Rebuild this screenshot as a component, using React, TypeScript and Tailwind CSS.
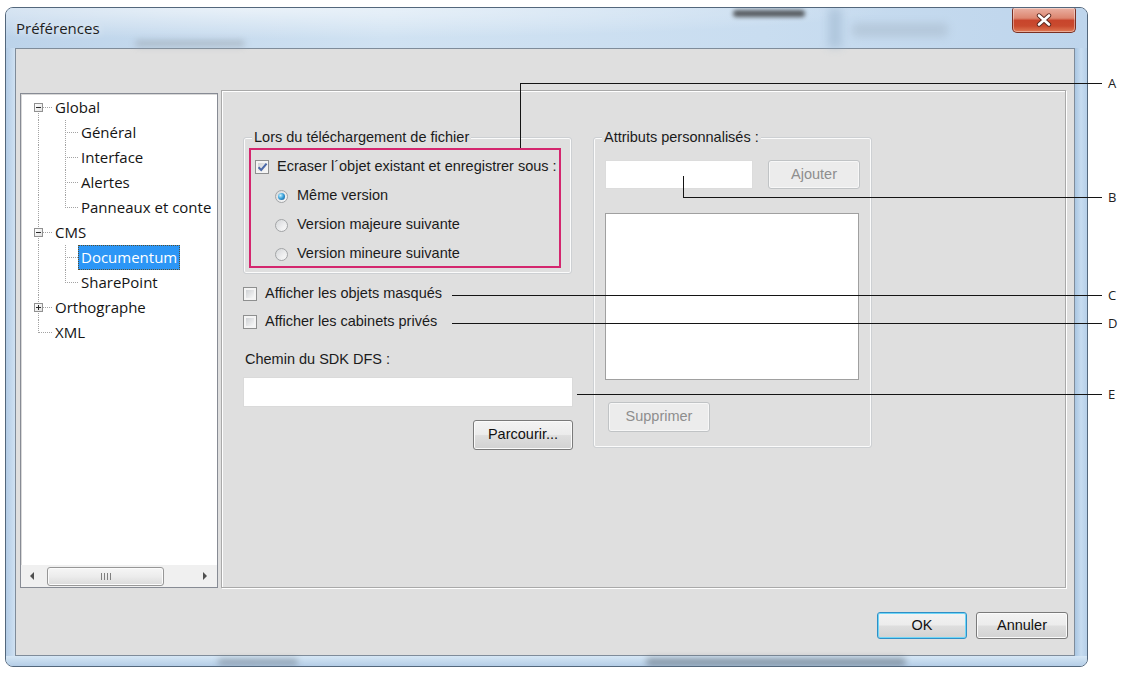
import React from "react";

const ui = "font-['Liberation_Sans',Arial,sans-serif]";
const seg = "font-['Open_Sans','Noto_Sans',sans-serif]";

type TreeNode = {
  label: string;
  level: 0 | 1;
  root: "down" | "full" | "up";
  branch?: "full" | "up";
  toggle?: "minus" | "plus";
  selected?: boolean;
};

const TREE: TreeNode[] = [
  { label: "Global", level: 0, root: "down", toggle: "minus" },
  { label: "Général", level: 1, root: "full", branch: "full" },
  { label: "Interface", level: 1, root: "full", branch: "full" },
  { label: "Alertes", level: 1, root: "full", branch: "full" },
  { label: "Panneaux et conte", level: 1, root: "full", branch: "up" },
  { label: "CMS", level: 0, root: "full", toggle: "minus" },
  { label: "Documentum", level: 1, root: "full", branch: "full", selected: true },
  { label: "SharePoint", level: 1, root: "full", branch: "up" },
  { label: "Orthographe", level: 0, root: "full", toggle: "plus" },
  { label: "XML", level: 0, root: "up" },
];

const dots = "border-dotted border-[#a3a3a3]";

function Toggle({ kind }: { kind: "minus" | "plus" }) {
  return (
    <span className="absolute left-[13px] top-[8px] flex h-[9px] w-[9px] items-center justify-center border border-[#919191] bg-[linear-gradient(135deg,#ffffff,#e2e2e2)]">
      <span className="absolute h-px w-[5px] bg-[#2a2a2a]" />
      {kind === "plus" && <span className="absolute h-[5px] w-px bg-[#2a2a2a]" />}
    </span>
  );
}

function TreeRow({ node }: { node: TreeNode }) {
  const rootSpan =
    node.root === "full" ? "top-0 bottom-0" : node.root === "down" ? "top-[12px] bottom-0" : "top-0 h-[13px]";
  const branchSpan = node.branch === "full" ? "top-0 bottom-0" : "top-0 h-[13px]";

  return (
    <div className="relative flex h-[25px] shrink-0 items-center whitespace-nowrap">
      <span className={`absolute left-[17px] w-0 border-l ${dots} ${rootSpan}`} />
      {node.level === 0 ? (
        <span className={`absolute left-[17px] top-[12px] w-[14px] border-t ${dots}`} />
      ) : (
        <>
          <span className={`absolute left-[44px] w-0 border-l ${dots} ${branchSpan}`} />
          <span className={`absolute left-[44px] top-[12px] w-[13px] border-t ${dots}`} />
        </>
      )}
      {node.toggle && <Toggle kind={node.toggle} />}

      {node.selected ? (
        <span className="ml-[57px] flex h-[25px] items-center border border-dotted border-[#5a4e2c] bg-[#2c96f6] px-[2px] text-white">
          {node.label}
        </span>
      ) : (
        <span className={node.level === 0 ? "pl-[34px]" : "pl-[60px]"}>{node.label}</span>
      )}
    </div>
  );
}

function HScroll() {
  return (
    <div className="flex h-[22px] shrink-0 items-center bg-[#f0f0f0]">
      <span className="ml-[9px] h-0 w-0 border-y-[4px] border-r-[4px] border-y-transparent border-r-[#505050]" />
      <div className="ml-[13px] flex h-[19px] w-[117px] items-center justify-center gap-[2px] rounded-[3px] border border-[#979797] bg-[linear-gradient(180deg,#f6f6f6_0%,#ececec_50%,#dadada_100%)] shadow-[inset_0_0_0_1px_#fbfbfb]">
        <span className="h-[7px] w-px bg-[#808080]" />
        <span className="h-[7px] w-px bg-[#808080]" />
        <span className="h-[7px] w-px bg-[#808080]" />
        <span className="h-[7px] w-px bg-[#808080]" />
      </div>
      <span className="ml-auto mr-[10px] h-0 w-0 border-y-[4px] border-l-[4px] border-y-transparent border-l-[#505050]" />
    </div>
  );
}

function Tree() {
  return (
    <div className="mt-[3px] flex h-[495px] w-[198px] shrink-0 flex-col overflow-hidden border border-[#878b94] bg-white shadow-[inset_1px_1px_0_#d8d8d8]">
      <div className={`flex-1 pt-px text-[15px] text-[#141414] ${seg}`}>
        {TREE.map((node) => (
          <TreeRow key={node.label} node={node} />
        ))}
      </div>
      <HScroll />
    </div>
  );
}

function CheckBox({ checked }: { checked?: boolean }) {
  return (
    <span className="relative flex h-[14px] w-[14px] shrink-0 items-center justify-center border border-[#8e8f8f] bg-[#f4f4f4]">
      <span className="absolute inset-[2px] bg-[linear-gradient(135deg,#cfd1d4,#f7f7f7)]" />
      {checked && (
        <svg className="relative" width="11" height="10" viewBox="0 0 11 10">
          <path d="M1.5 5.2 L4.2 8 L9.6 1.6" fill="none" stroke="#4b69a8" strokeWidth="2" />
        </svg>
      )}
    </span>
  );
}

function Radio({ checked }: { checked?: boolean }) {
  return (
    <span className="relative flex h-[13px] w-[13px] shrink-0 items-center justify-center rounded-full border border-[#a2a4a6] bg-[linear-gradient(135deg,#d6d8da,#fafafa)]">
      <span className="absolute inset-[2px] rounded-full bg-[linear-gradient(135deg,#dcdde0,#f8f8f8)]" />
      {checked && (
        <span className="relative h-[7px] w-[7px] rounded-full bg-[radial-gradient(circle_at_35%_35%,#cdf4ff_0%,#3ea4dc_45%,#0d4f8a_100%)]" />
      )}
    </span>
  );
}

function Button({
  children,
  className = "",
  disabled,
  focused,
}: {
  children: React.ReactNode;
  className?: string;
  disabled?: boolean;
  focused?: boolean;
}) {
  const look = disabled
    ? "border-[#c0c3c5] bg-[#ececec] text-[#8e8e8e] shadow-[inset_0_0_0_1px_#f7f7f7]"
    : focused
      ? "border-[#2f8fc6] bg-[linear-gradient(180deg,#f3f3f3_0%,#ececec_48%,#dedede_52%,#d2d2d2_100%)] text-[#111] shadow-[inset_0_0_0_1px_#6fd6f7]"
      : "border-[#7a7a7a] bg-[linear-gradient(180deg,#f3f3f3_0%,#ececec_48%,#dedede_52%,#d2d2d2_100%)] text-[#111] shadow-[inset_0_0_0_1px_#fbfbfb]";
  return (
    <div className={`flex shrink-0 items-center justify-center rounded-[3px] border text-[14.5px] ${look} ${className}`}>
      {children}
    </div>
  );
}

function GroupBox({
  title,
  className = "",
  children,
}: {
  title: string;
  className?: string;
  children: React.ReactNode;
}) {
  return (
    <fieldset
      className={`rounded-[3px] border border-[#cdd0d3] shadow-[inset_0_0_0_1px_#fbfbfb] ${className}`}
    >
      <legend className="ml-[8px] bg-[#dfdfdf] px-[2px] leading-[18px]">{title}</legend>
      {children}
    </fieldset>
  );
}

function DocumentumPanel() {
  return (
    <div
      className={`ml-[3px] flex h-[498px] w-[845px] shrink-0 items-start gap-[20px] border border-[#a9a9a9] pl-[21px] pt-[37px] text-[14.5px] text-[#1b1b1b] shadow-[inset_1px_1px_0_#ffffff,1px_1px_0_#ffffff] ${ui}`}
    >
      {/* left column */}
      <div className="flex w-[330px] flex-col">
        <GroupBox title="Lors du téléchargement de fichier" className="w-[329px] pb-[5px]">
          <div className="ml-[5px] mt-[2px] flex w-[312px] flex-col gap-[5px] border-2 border-[#d4266e] pl-[4px]">
            <div className="mt-[5px] flex h-[24px] items-center gap-[8px]">
              <CheckBox checked />
              <span>Ecraser l´objet existant et enregistrer sous :</span>
            </div>
            <div className="flex h-[24px] items-center gap-[9px] pl-[20px]">
              <Radio checked />
              <span>Même version</span>
            </div>
            <div className="flex h-[24px] items-center gap-[9px] pl-[20px]">
              <Radio />
              <span>Version majeure suivante</span>
            </div>
            <div className="flex h-[24px] items-center gap-[9px] pl-[20px]">
              <Radio />
              <span>Version mineure suivante</span>
            </div>
          </div>
        </GroupBox>

        <div className="mt-[8px] flex h-[24px] items-center gap-[8px]">
          <CheckBox />
          <span>Afficher les objets masqués</span>
        </div>
        <div className="mt-[4px] flex h-[24px] items-center gap-[8px]">
          <CheckBox />
          <span>Afficher les cabinets privés</span>
        </div>
        <div className="mt-[16px] flex h-[20px] items-center pl-[2px]">Chemin du SDK DFS :</div>
        <div className="mt-[7px] h-[30px] w-[330px] border border-[#dadada] bg-white" />
        <Button className="mt-[13px] h-[30px] w-[100px] self-end">Parcourir...</Button>
      </div>

      {/* right column */}
      <GroupBox title="Attributs personnalisés :" className="w-[279px] pb-[15px]">
        <div className="mt-[14px] flex items-center">
          <div className="ml-[11px] h-[29px] w-[148px] border border-[#dcdcdc] bg-white" />
          <Button disabled className="ml-[15px] h-[29px] w-[92px]">
            Ajouter
          </Button>
        </div>
        <div className="ml-[11px] mt-[24px] h-[167px] w-[254px] border border-[#a0a0a0] bg-white" />
        <Button disabled className="ml-[14px] mt-[22px] h-[30px] w-[102px]">
          Supprimer
        </Button>
      </GroupBox>
    </div>
  );
}

function CloseButton() {
  return (
    <div className="mr-[11px] flex h-[25px] w-[64px] shrink-0 items-center justify-center rounded-b-[5px] rounded-t-[2px] border border-t-0 border-[#7a2f22] bg-[linear-gradient(180deg,#eab0a2_0%,#dc8670_42%,#c8452c_52%,#c94a2e_75%,#e07a55_100%)] shadow-[inset_0_0_0_1px_rgba(255,255,255,0.4)]">
      <svg width="18" height="14" viewBox="0 0 18 14">
        <path d="M4 2.5 L14 11.5 M14 2.5 L4 11.5" stroke="#5a2a22" strokeWidth="4.4" strokeLinecap="round" />
        <path d="M4 2.5 L14 11.5 M14 2.5 L4 11.5" stroke="#ffffff" strokeWidth="2.6" strokeLinecap="round" />
      </svg>
    </div>
  );
}

function TitleBar() {
  return (
    <div className="relative flex h-[40px] shrink-0 items-start justify-between bg-[radial-gradient(ellipse_at_22%_0%,rgba(255,255,255,0.6),transparent_55%),linear-gradient(90deg,#bcd3ea_0%,#d0e2f2_35%,#c9ddf0_70%,#bed5ec_100%)]">
      {/* desktop showing through the glass */}
      <span className="absolute left-[727px] top-[2px] h-[7px] w-[72px] rounded-full bg-[#2e2e2e] opacity-75 blur-[2px]" />
      <span className="absolute left-[129px] top-[32px] h-[7px] w-[110px] rounded-full bg-[#98a2ab] opacity-50 blur-[3px]" />
      <span className="absolute left-[846px] top-[15px] h-[14px] w-[96px] rounded bg-[#a3b4c4] opacity-45 blur-[4px]" />
      <span className="absolute left-[822px] top-0 h-full w-[14px] bg-[#8fa9c3] opacity-40 blur-[4px]" />
      <span
        className={`relative ml-[10px] mt-[10px] text-[15px] leading-[20px] text-[#1e1e1e] [text-shadow:0_0_8px_rgba(255,255,255,0.9)] ${seg}`}
      >
        Préférences
      </span>
      <CloseButton />
    </div>
  );
}

function Window() {
  return (
    <div className="relative flex h-[660px] w-[1083px] flex-col overflow-hidden rounded-[8px] border border-[#53677c] bg-[linear-gradient(180deg,#c6dbef_0%,#bcd4eb_100%)] shadow-[inset_0_0_0_1px_rgba(255,255,255,0.55)]">
      <TitleBar />
      <div className="flex">
        <div className="w-[9px] shrink-0 bg-[linear-gradient(90deg,#b3cce6,#cfe1f2)]" />
        <div className="flex h-[608px] w-[1060px] shrink-0 flex-col border border-[#7f8c9a] bg-[#dfdfdf]">
          <div className="flex items-start pl-[4px] pt-[41px]">
            <Tree />
            <DocumentumPanel />
          </div>
          <div className={`mt-[24px] flex justify-end gap-[9px] pr-[6px] ${ui}`}>
            <Button focused className="h-[27px] w-[90px]">
              OK
            </Button>
            <Button className="h-[27px] w-[92px]">Annuler</Button>
          </div>
        </div>
        <div className="w-[12px] shrink-0 bg-[linear-gradient(90deg,#a9c6e2,#c7dcf0_50%,#b6cfe8)]" />
      </div>
      <div className="relative flex-1 bg-[linear-gradient(180deg,#d6e7f5,#b4cde6)]">
        <span className="absolute left-[640px] top-[2px] h-[8px] w-[260px] rounded-full bg-[#404a55] opacity-45 blur-[3px]" />
        <span className="absolute left-[212px] top-[3px] h-[6px] w-[80px] rounded-full bg-[#404a55] opacity-40 blur-[3px]" />
      </div>
    </div>
  );
}

// leader lines and letters on the right of the dialog
function Callouts() {
  const line = "absolute bg-[#141414]";
  const tag = `absolute left-[1108px] text-[13px] leading-[16px] text-[#222] ${seg}`;
  return (
    <div className="pointer-events-none absolute inset-0">
      <span className={`${line} left-[520px] top-[83px] h-[65px] w-px`} />
      <span className={`${line} left-[520px] top-[83px] h-px w-[582px]`} />
      <span className={`${tag} top-[75px]`}>A</span>

      <span className={`${line} left-[683px] top-[176px] h-[22px] w-px`} />
      <span className={`${line} left-[683px] top-[197px] h-px w-[419px]`} />
      <span className={`${tag} top-[189px]`}>B</span>

      <span className={`${line} left-[452px] top-[295px] h-px w-[650px]`} />
      <span className={`${tag} top-[287px]`}>C</span>

      <span className={`${line} left-[452px] top-[323px] h-px w-[650px]`} />
      <span className={`${tag} top-[315px]`}>D</span>

      <span className={`${line} left-[577px] top-[394px] h-px w-[525px]`} />
      <span className={`${tag} top-[386px]`}>E</span>
    </div>
  );
}

export default function App() {
  return (
    <div className={`relative h-[673px] w-[1129px] overflow-hidden bg-white ${ui}`}>
      <div className="pl-[5px] pt-[7px]">
        <Window />
      </div>
      <Callouts />
    </div>
  );
}
